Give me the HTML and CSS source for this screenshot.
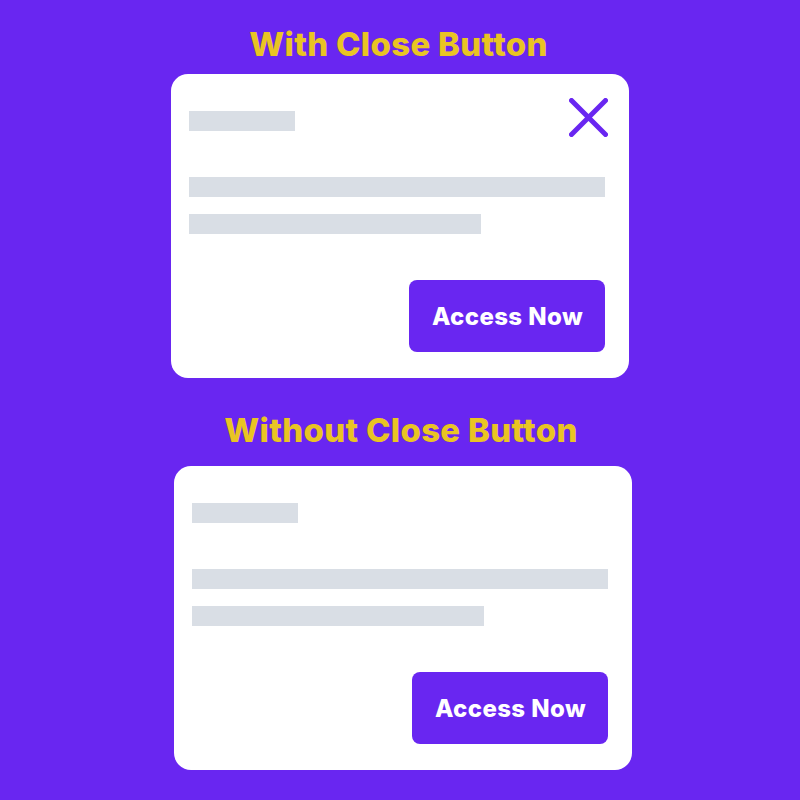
FILE: index.html
```html
<!DOCTYPE html>
<html lang="en">
<head>
<meta charset="utf-8">
<title>Close Button Comparison</title>
<link rel="stylesheet" href="styles.css">
</head>
<body>
<main class="page">
  <section class="section section--first">
    <h2 class="title">With Close Button</h2>
    <div class="card">
      <button class="close" aria-label="Close">
        <svg viewBox="0 0 39 39" width="39" height="39">
          <line x1="2.5" y1="2.5" x2="36.5" y2="36.5"/>
          <line x1="36.5" y1="2.5" x2="2.5" y2="36.5"/>
        </svg>
      </button>
      <div class="skel skel--short"></div>
      <div class="skel skel--full"></div>
      <div class="skel skel--mid"></div>
      <div class="actions"><button class="cta">Access Now</button></div>
    </div>
  </section>
  <section class="section section--second">
    <h2 class="title">Without Close Button</h2>
    <div class="card">
      <div class="skel skel--short"></div>
      <div class="skel skel--full"></div>
      <div class="skel skel--mid"></div>
      <div class="actions"><button class="cta">Access Now</button></div>
    </div>
  </section>
</main>
</body>
</html>
```

FILE: styles.css
```css
* { box-sizing: border-box; }
html, body { margin: 0; padding: 0; }
body {
  background: #6926f1;
  font-family: Inter, "Liberation Sans", sans-serif;
  width: 800px;
  height: 800px;
  overflow: hidden;
}
.page {
  display: flex;
  flex-direction: column;
  align-items: center;
  padding-top: 28px;
}
.section {
  display: flex;
  flex-direction: column;
  align-items: center;
}
.section--second {
  margin-top: 36px;
  margin-left: 6px;
}
.title {
  margin: 0 0 13px;
  font-size: 33px;
  line-height: 33px;
  font-weight: 800;
  color: #e9c423;
  letter-spacing: 0.3px;
}
.section--first .title { margin-left: -3px; }
.section--second .title { margin-bottom: 19px; margin-left: -4px; }
.card {
  position: relative;
  width: 458px;
  height: 304px;
  background: #ffffff;
  border-radius: 17px;
  padding: 37px 24px 26px 18px;
  display: flex;
  flex-direction: column;
}
.skel {
  height: 20px;
  background: #d9dee5;
  flex: none;
}
.skel--short { width: 106px; margin-bottom: 46px; }
.skel--full { width: 416px; margin-bottom: 17px; }
.skel--mid { width: 292px; margin-bottom: 46px; }
.actions {
  display: flex;
  justify-content: flex-end;
}
.cta {
  width: 196px;
  height: 72px;
  border: 0;
  border-radius: 8px;
  background: #6926f1;
  color: #ffffff;
  font-family: Inter, "Liberation Sans", sans-serif;
  font-weight: 800;
  font-size: 24px;
  letter-spacing: 0.4px;
  padding: 0 0 0 1px;
}
.close {
  position: absolute;
  top: 24px;
  right: 21px;
  width: 39px;
  height: 39px;
  padding: 0;
  border: 0;
  background: none;
}
.close svg { display: block; }
.close line {
  stroke: #6926f1;
  stroke-width: 5;
  stroke-linecap: round;
}
```
